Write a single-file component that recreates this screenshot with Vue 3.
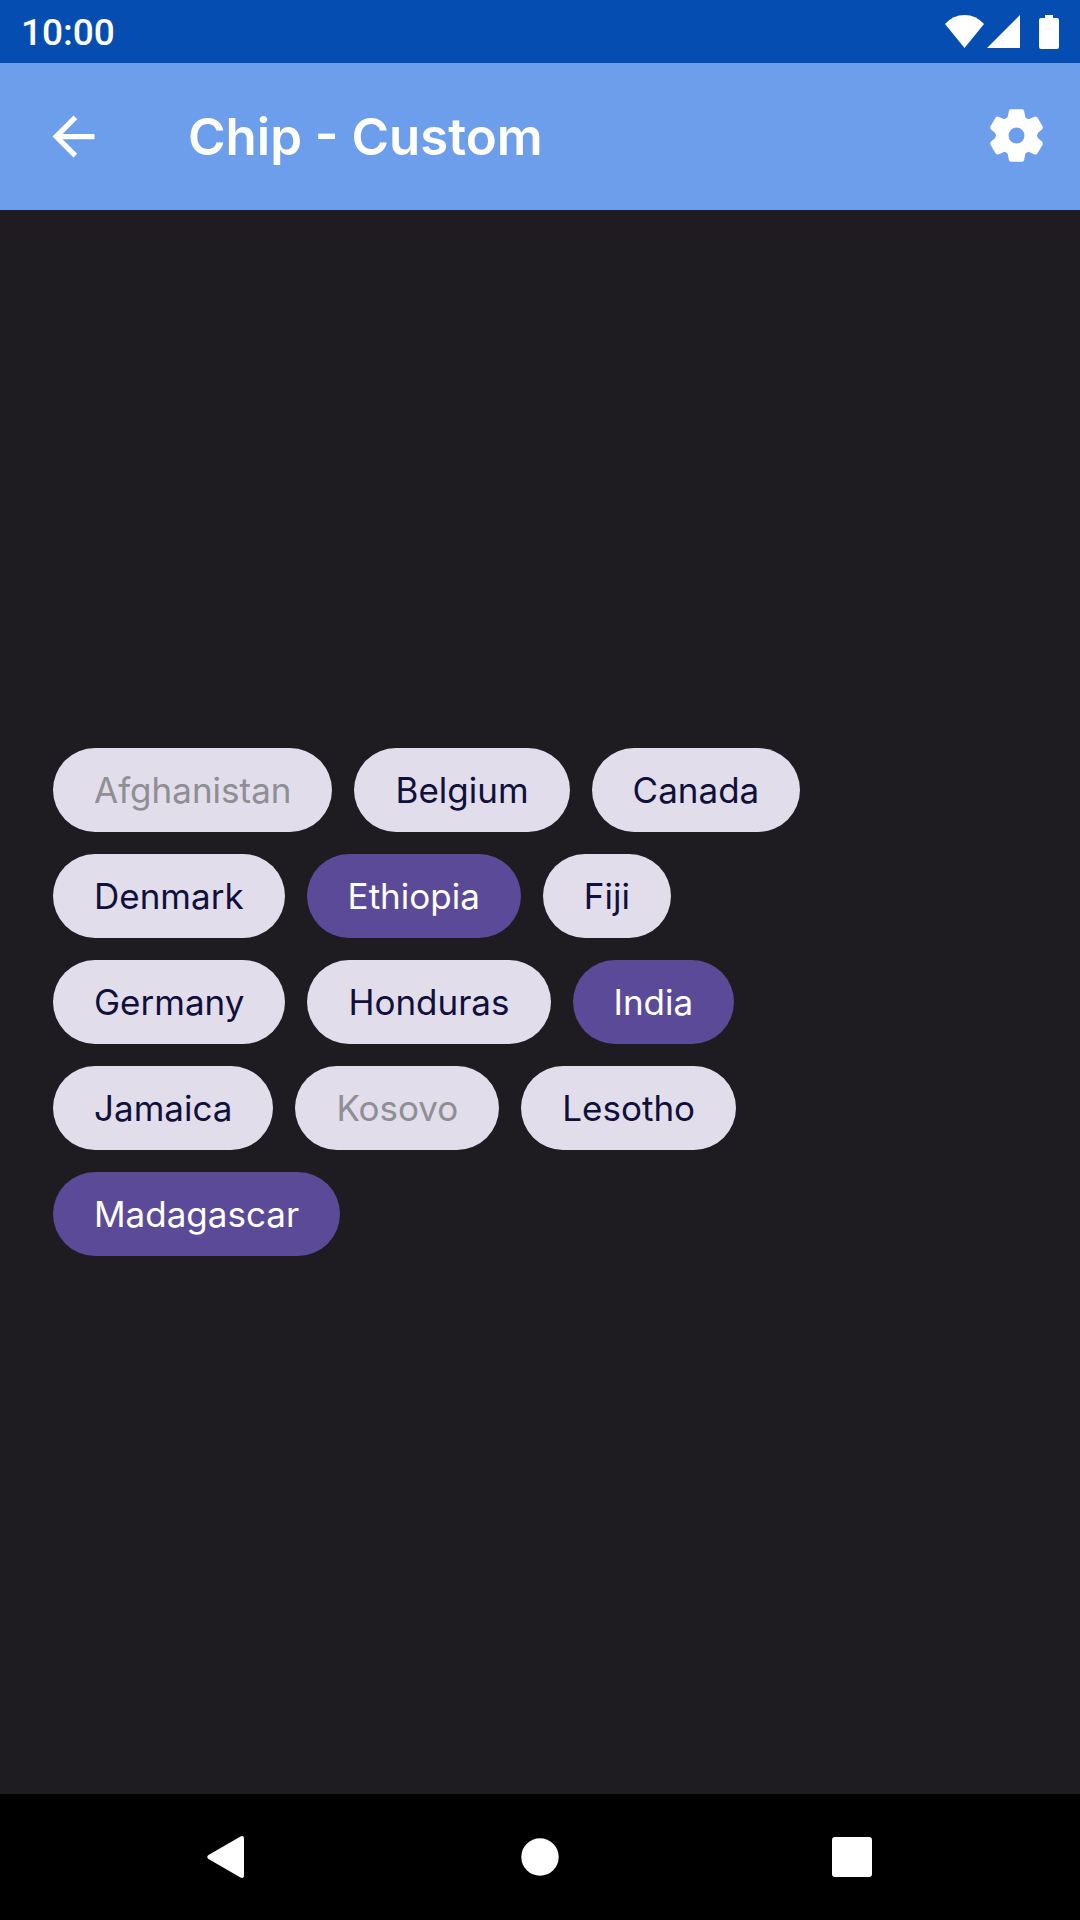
<script setup>
import { ref } from 'vue'

const rows = ref([
  [
    { name: 'Afghanistan', disabled: true },
    { name: 'Belgium' },
    { name: 'Canada' },
  ],
  [
    { name: 'Denmark' },
    { name: 'Ethiopia', selected: true },
    { name: 'Fiji' },
  ],
  [
    { name: 'Germany' },
    { name: 'Honduras' },
    { name: 'India', selected: true },
  ],
  [
    { name: 'Jamaica' },
    { name: 'Kosovo', disabled: true },
    { name: 'Lesotho' },
  ],
  [{ name: 'Madagascar', selected: true }],
])
</script>

<template>
  <div class="screen">
    <div class="status-bar">
      <span class="clock">10:00</span>
      <svg class="status-icons" width="114" height="34" viewBox="0 0 114 34" fill="#fff" aria-hidden="true">
        <path d="M0 9Q8 0 19.500 0T39 9L19.500 33Z" />
        <path d="M75 0V33H42Z" />
        <path d="M100 0h8v3h4q2 0 2 2v27q0 2-2 2H96q-2 0-2-2V5q0-2 2-2h4Z" />
      </svg>
    </div>

    <header class="app-bar">
      <button class="icon-button" type="button" aria-label="Back">
        <svg width="63" height="63" viewBox="0 0 24 24" fill="#fff">
          <path d="M20 11H7.830l5.590-5.590L12 4l-8 8 8 8 1.410-1.410L7.830 13H20z" />
        </svg>
      </button>
      <h1 class="title">Chip - Custom</h1>
      <button class="icon-button" type="button" aria-label="Settings">
        <svg width="53" height="55" viewBox="-80 -80 160 166" fill="#fff" fill-rule="evenodd">
          <path
            d="M-17-79H17Q22-79 23-74L26-58Q28-49 38-50L55-57Q60-58 63-54L79-27Q80-22 77-18L66-9Q58 0 66 9L77 18Q80 22 79 27L63 54Q60 58 55 57L38 50Q28 49 26 58L23 74Q22 79 17 79H-17Q-22 79-23 74L-26 58Q-28 49-38 50L-55 57Q-60 58-63 54L-79 27Q-80 22-77 18L-66 9Q-58 0-66-9L-77-18Q-80-22-79-27L-63-54Q-60-58-55-57L-38-50Q-28-49-26-58L-23-74Q-22-79-17-79ZM-24 0A24 24 0 1 0 24 0A24 24 0 1 0-24 0Z"
          />
        </svg>
      </button>
    </header>

    <main class="content">
      <div v-for="(row, index) in rows" :key="index" class="chip-row">
        <button
          v-for="chip in row"
          :key="chip.name"
          type="button"
          class="chip"
          :class="{ selected: chip.selected }"
          :disabled="chip.disabled"
          :aria-pressed="chip.selected ? 'true' : 'false'"
          @click="chip.selected = !chip.selected"
        >{{ chip.name }}</button>
      </div>
    </main>

    <nav class="nav-bar" aria-label="System">
      <button type="button" aria-label="Back">
        <svg width="42" height="42" viewBox="0 0 42 42" fill="#fff">
          <path d="M33.500.500Q37 -1 37 3V39Q37 43 33.500 41.500L1.500 23Q-1 21 1.500 19Z" />
        </svg>
      </button>
      <button type="button" aria-label="Home">
        <svg width="38" height="38" viewBox="0 0 38 38" fill="#fff"><circle cx="19" cy="19" r="18.700" /></svg>
      </button>
      <button type="button" aria-label="Recent apps">
        <svg width="40" height="40" viewBox="0 0 40 40" fill="#fff"><rect width="40" height="40" rx="3" /></svg>
      </button>
    </nav>
  </div>
</template>

<style>
body {
  margin: 0;
  background: #1e1c20;
}
</style>

<style scoped>
.screen {
  display: flex;
  flex-direction: column;
  min-height: 100vh;
  background: #1e1c20;
  color: #fff;
  font-family: Inter, "Liberation Sans", sans-serif;
}

button {
  margin: 0;
  padding: 0;
  border: 0;
  background: none;
  font: inherit;
  color: inherit;
  cursor: pointer;
}

svg {
  display: block;
}

.status-bar {
  display: flex;
  align-items: center;
  justify-content: space-between;
  height: 63px;
  padding: 0 21px;
  background: #064db2;
}

.clock {
  padding-top: 2px;
  font: 500 37px/48px Roboto, sans-serif;
}

.app-bar {
  display: flex;
  align-items: center;
  height: 147px;
  padding: 0 37px 0 42px;
  background: #6c9eeb;
}

.title {
  flex: 1;
  margin: 0 0 0 83px;
  font-size: 51px;
  font-weight: 600;
  line-height: 64px;
}

.content {
  flex: 1;
  display: flex;
  flex-direction: column;
  justify-content: center;
  gap: 22px;
  padding: 0 53px;
}

.chip-row {
  display: flex;
  flex-wrap: wrap;
  gap: 22px;
}

.chip {
  height: 84px;
  padding: 0 41px;
  border-radius: 42px;
  background: #e1ddeb;
  color: #10103a;
  font-size: 35px;
  line-height: 48px;
}

.chip.selected {
  background: #5a4a98;
  color: #fff;
}

.chip:disabled {
  color: #8f8e92;
  cursor: default;
}

.nav-bar {
  display: grid;
  grid-template-columns: repeat(3, 1fr);
  height: 126px;
  padding: 0 72px;
  background: #000;
}

.nav-bar button {
  display: flex;
  align-items: center;
  justify-content: center;
}
</style>
